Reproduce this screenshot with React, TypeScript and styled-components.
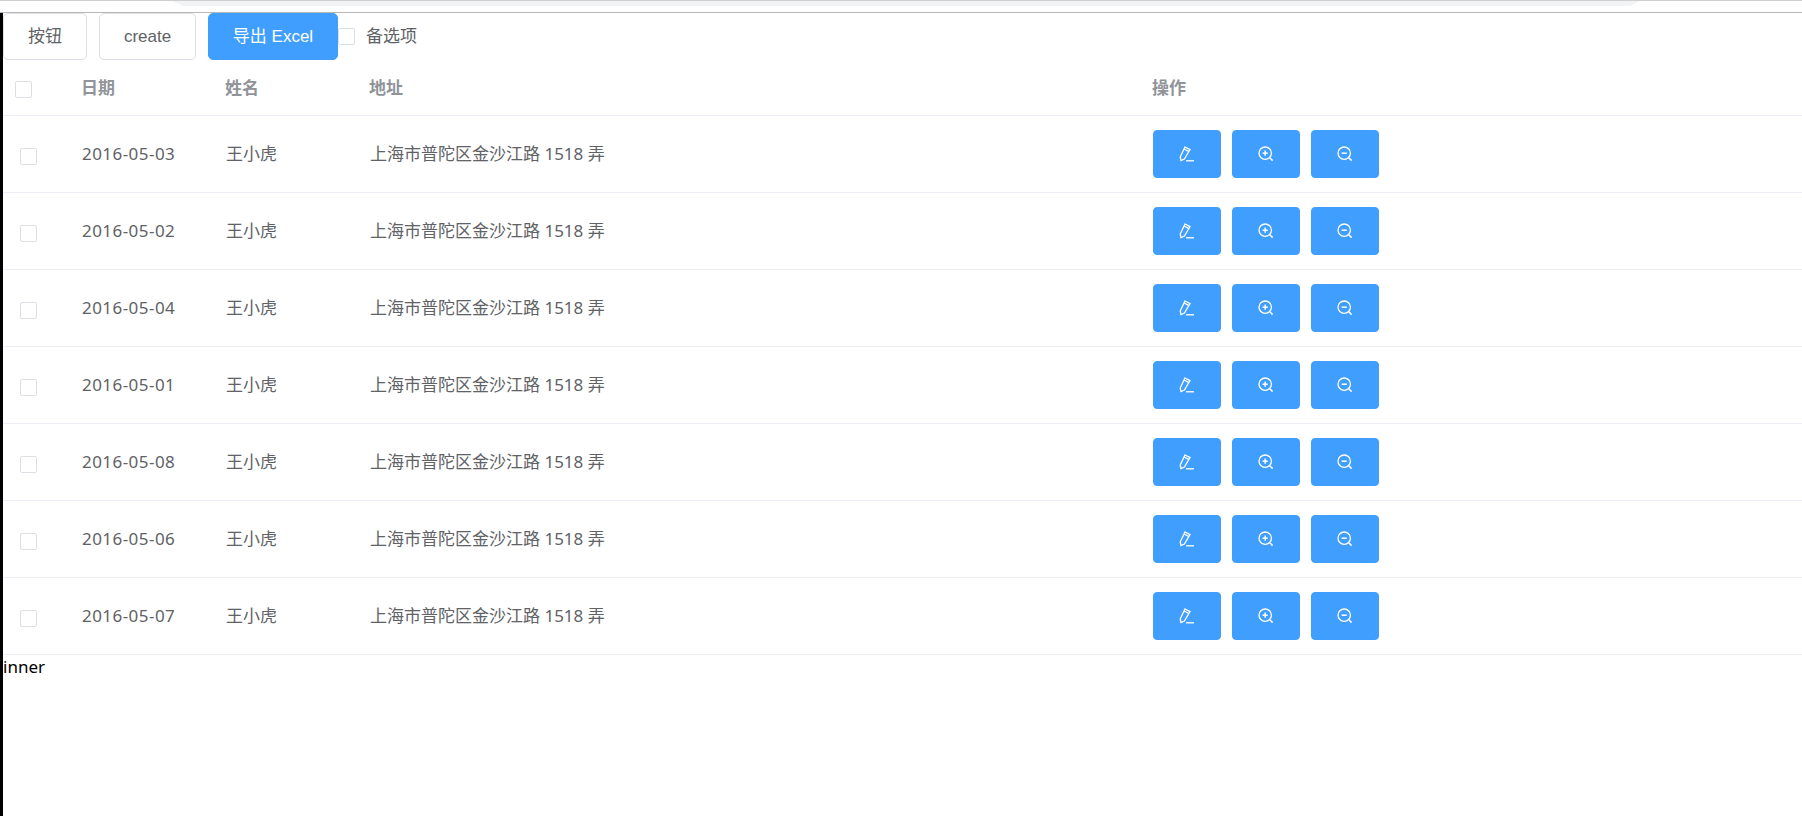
import React from "react";
import styled, { createGlobalStyle } from "styled-components";

const FONT = `"Noto Sans", "Noto Sans CJK SC", sans-serif`;
const BTN_FONT = `"Liberation Sans", "Noto Sans CJK SC", sans-serif`;

const Global = createGlobalStyle`
  html, body { margin: 0; padding: 0; background: #fff; }
  body { font-family: ${FONT}; height: 816px; overflow: hidden; }
`;

const Page = styled.div`
  width: 1802px;
  height: 816px;
  display: flex;
  flex-direction: column;
`;

const TopBar = styled.div`
  flex: none;
  box-sizing: border-box;
  border-top: 1px solid #cfcfcf;
  border-bottom: 1px solid #b8b8b8;
  height: 13px;
  padding: 0 162px 0 172px;
`;

const TopTab = styled.div`
  height: 5px;
  background: #f1f3f4;
  clip-path: polygon(0 0, 100% 0, calc(100% - 10px) 100%, 11px 100%);
`;

const Main = styled.div`
  flex: 1;
  border-left: 3px solid #000;
  display: flex;
  flex-direction: column;
  min-height: 0;
`;

const Toolbar = styled.div`
  height: 47px;
  flex: none;
  display: flex;
  align-items: stretch;
`;

const Button = styled.button<{ $w: number; $primary?: boolean }>`
  width: ${(p) => p.$w}px;
  margin-right: ${(p) => (p.$primary ? 0 : 12)}px;
  box-sizing: border-box;
  padding: 1px 0 0;
  font-family: ${BTN_FONT};
  font-size: 17px;
  line-height: 24px;
  color: ${(p) => (p.$primary ? "#fff" : "#606266")};
  background: ${(p) => (p.$primary ? "#409eff" : "#fff")};
  border: 1px solid ${(p) => (p.$primary ? "#409eff" : "#dcdfe6")};
  border-radius: 5px;
`;

const Check = styled.span`
  width: 17px;
  height: 17px;
  flex: none;
  box-sizing: border-box;
  display: block;
  background: #fff;
  border: 1px solid #dcdfe6;
  border-radius: 2px;
`;

const CheckLabel = styled.label`
  display: flex;
  align-items: center;
  gap: 11px;
  font-family: ${BTN_FONT};
  font-size: 17px;
  line-height: 24px;
  color: #606266;
`;

const Row = styled.div<{ $head?: boolean }>`
  display: grid;
  grid-template-columns: 78px 144px 144px 783px 1fr;
  align-items: center;
  box-sizing: border-box;
  height: ${(p) => (p.$head ? 56 : 77)}px;
  border-bottom: 1px solid #ebeef5;
  font-size: 17px;
  line-height: 24px;
  font-weight: ${(p) => (p.$head ? 700 : 400)};
  color: ${(p) => (p.$head ? "#909399" : "#606266")};
`;

const CheckCell = styled.div<{ $head?: boolean }>`
  padding-left: ${(p) => (p.$head ? 12 : 17)}px;
  padding-top: 4px;
`;

const Cell = styled.div<{ $head?: boolean }>`
  padding: 0 0 ${(p) => (p.$head ? 0 : 1)}px ${(p) => (p.$head ? 0 : 1)}px;
  white-space: nowrap;
`;

const DateText = styled.span`
  letter-spacing: 0.45px;
`;

const Actions = styled.div`
  display: flex;
  gap: 11.5px;
  padding-left: 1px;
`;

const IconButton = styled.button`
  width: 67.5px;
  height: 48px;
  padding: 0;
  display: flex;
  align-items: center;
  justify-content: center;
  background: #409eff;
  border: 1px solid #409eff;
  border-radius: 4px;
`;

const Inner = styled.div`
  font-size: 17px;
  line-height: 24px;
  color: #000;
`;

const EditIcon = () => (
  <svg width="16" height="16" viewBox="0 0 16 16" fill="none" stroke="#fff" strokeWidth="1.3">
    <path d="M6 1 11 3.6 5.4 13 2 14.5 1.2 11Z" />
    <path d="M5 3 10 5.6" />
    <path d="M7 14.8H15" />
  </svg>
);

const ZoomIcon = ({ plus }: { plus?: boolean }) => (
  <svg width="16" height="16" viewBox="0 0 16 16" fill="none" stroke="#fff" strokeWidth="1.3">
    <circle cx="7.2" cy="7.2" r="6.2" />
    <path d="M11.8 11.8 14.6 14.6" strokeWidth="1.5" />
    <path d="M4.6 7.2H9.8" strokeWidth="1.5" />
    {plus && <path d="M7.2 4.6V9.8" strokeWidth="1.5" />}
  </svg>
);

const dates = [
  "2016-05-03",
  "2016-05-02",
  "2016-05-04",
  "2016-05-01",
  "2016-05-08",
  "2016-05-06",
  "2016-05-07",
];

export default function App() {
  return (
    <Page>
      <Global />
      <TopBar>
        <TopTab />
      </TopBar>
      <Main>
        <Toolbar>
          <Button $w={84}>按钮</Button>
          <Button $w={97}>create</Button>
          <Button $w={130} $primary>
            导出 Excel
          </Button>
          <CheckLabel>
            <Check />
            备选项
          </CheckLabel>
        </Toolbar>
        <Row $head>
          <CheckCell $head>
            <Check />
          </CheckCell>
          <Cell $head>日期</Cell>
          <Cell $head>姓名</Cell>
          <Cell $head>地址</Cell>
          <Cell $head>操作</Cell>
        </Row>
        {dates.map((d) => (
          <Row key={d}>
            <CheckCell>
              <Check />
            </CheckCell>
            <Cell>
              <DateText>{d}</DateText>
            </Cell>
            <Cell>王小虎</Cell>
            <Cell>上海市普陀区金沙江路 1518 弄</Cell>
            <Actions>
              <IconButton>
                <EditIcon />
              </IconButton>
              <IconButton>
                <ZoomIcon plus />
              </IconButton>
              <IconButton>
                <ZoomIcon />
              </IconButton>
            </Actions>
          </Row>
        ))}
        <Inner>inner</Inner>
      </Main>
    </Page>
  );
}
